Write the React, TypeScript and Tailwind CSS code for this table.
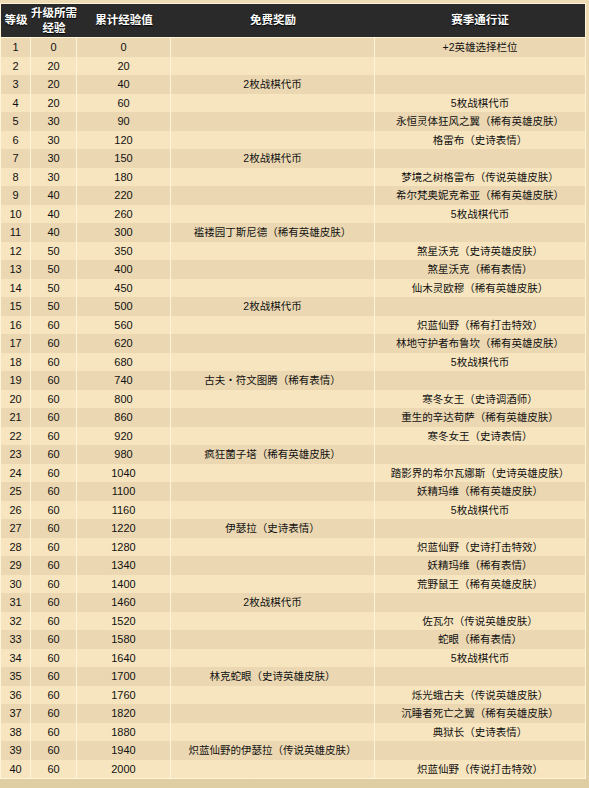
const rows: [number, number, number, string, string][] = [
  [1, 0, 0, "", "+2英雄选择栏位"],
  [2, 20, 20, "", ""],
  [3, 20, 40, "2枚战棋代币", ""],
  [4, 20, 60, "", "5枚战棋代币"],
  [5, 30, 90, "", "永恒灵体狂风之翼（稀有英雄皮肤）"],
  [6, 30, 120, "", "格雷布（史诗表情）"],
  [7, 30, 150, "2枚战棋代币", ""],
  [8, 30, 180, "", "梦境之树格雷布（传说英雄皮肤）"],
  [9, 40, 220, "", "希尔梵奥妮克希亚（稀有英雄皮肤）"],
  [10, 40, 260, "", "5枚战棋代币"],
  [11, 40, 300, "褴褛园丁斯尼德（稀有英雄皮肤）", ""],
  [12, 50, 350, "", "煞星沃克（史诗英雄皮肤）"],
  [13, 50, 400, "", "煞星沃克（稀有表情）"],
  [14, 50, 450, "", "仙木灵欧穆（稀有英雄皮肤）"],
  [15, 50, 500, "2枚战棋代币", ""],
  [16, 60, 560, "", "炽蓝仙野（稀有打击特效）"],
  [17, 60, 620, "", "林地守护者布鲁坎（稀有英雄皮肤）"],
  [18, 60, 680, "", "5枚战棋代币"],
  [19, 60, 740, "古夫・符文图腾（稀有表情）", ""],
  [20, 60, 800, "", "寒冬女王（史诗调酒师）"],
  [21, 60, 860, "", "重生的辛达苟萨（稀有英雄皮肤）"],
  [22, 60, 920, "", "寒冬女王（史诗表情）"],
  [23, 60, 980, "疯狂菌子塔（稀有英雄皮肤）", ""],
  [24, 60, 1040, "", "踏影界的希尔瓦娜斯（史诗英雄皮肤）"],
  [25, 60, 1100, "", "妖精玛维（稀有英雄皮肤）"],
  [26, 60, 1160, "", "5枚战棋代币"],
  [27, 60, 1220, "伊瑟拉（史诗表情）", ""],
  [28, 60, 1280, "", "炽蓝仙野（史诗打击特效）"],
  [29, 60, 1340, "", "妖精玛维（稀有表情）"],
  [30, 60, 1400, "", "荒野鼠王（稀有英雄皮肤）"],
  [31, 60, 1460, "2枚战棋代币", ""],
  [32, 60, 1520, "", "佐瓦尔（传说英雄皮肤）"],
  [33, 60, 1580, "", "蛇眼（稀有表情）"],
  [34, 60, 1640, "", "5枚战棋代币"],
  [35, 60, 1700, "林克蛇眼（史诗英雄皮肤）", ""],
  [36, 60, 1760, "", "烁光蛾古夫（传说英雄皮肤）"],
  [37, 60, 1820, "", "沉睡者死亡之翼（稀有英雄皮肤）"],
  [38, 60, 1880, "", "典狱长（史诗表情）"],
  [39, 60, 1940, "炽蓝仙野的伊瑟拉（传说英雄皮肤）", ""],
  [40, 60, 2000, "", "炽蓝仙野（传说打击特效）"],
];

const font = { fontFamily: '"Liberation Sans", "Noto Sans CJK SC", sans-serif' };

export default function App() {
  return (
    <div
      className="w-[589px] h-[788px] bg-gradient-to-b from-[#ecdbb4] via-[#e9d8b0] to-[#dfcda3] pt-[3px] overflow-hidden"
      style={font}
    >
      <div className="w-[586px] border border-[#fff4d6] border-b-0">
        {/* header */}
        <div className="flex h-[33px] bg-[#2a2a2a] text-white font-bold text-[11.5px] leading-[15px] [text-shadow:0_1px_1px_#000]">
          <div className="w-[30px] flex items-center justify-center">等级</div>
          <div className="w-[46px] flex items-center justify-center text-center">
            升级所需
            <br />
            经验
          </div>
          <div className="w-[94px] flex items-center justify-center">累计经验值</div>
          <div className="w-[204px] flex items-center justify-center">免费奖励</div>
          <div className="flex-1 flex items-center justify-center">赛季通行证</div>
        </div>

        <div className="h-px bg-[#fff4d6]" />

        {/* body */}
        {rows.map(([lv, need, total, free, pass]) => (
          <div
            key={lv}
            className={`flex h-[18.5px] text-[#111] text-[11px] leading-[18.5px] text-center ${
              lv % 2 === 1 ? "bg-[#ebd8b2]" : "bg-[#f7e5bf]"
            }`}
          >
            <div className="w-[30px] border-r border-[#fff4d6]">{lv}</div>
            <div className="w-[46px] border-r border-[#fff4d6]">{need}</div>
            <div className="w-[94px] border-r border-[#fff4d6]">{total}</div>
            <div className="w-[204px] border-r border-[#fff4d6] whitespace-nowrap text-[10.5px]">{free}</div>
            <div className="flex-1 whitespace-nowrap text-[10.5px]">{pass}</div>
          </div>
        ))}
        <div className="h-px bg-[#fff4d6]" />
      </div>
    </div>
  );
}
